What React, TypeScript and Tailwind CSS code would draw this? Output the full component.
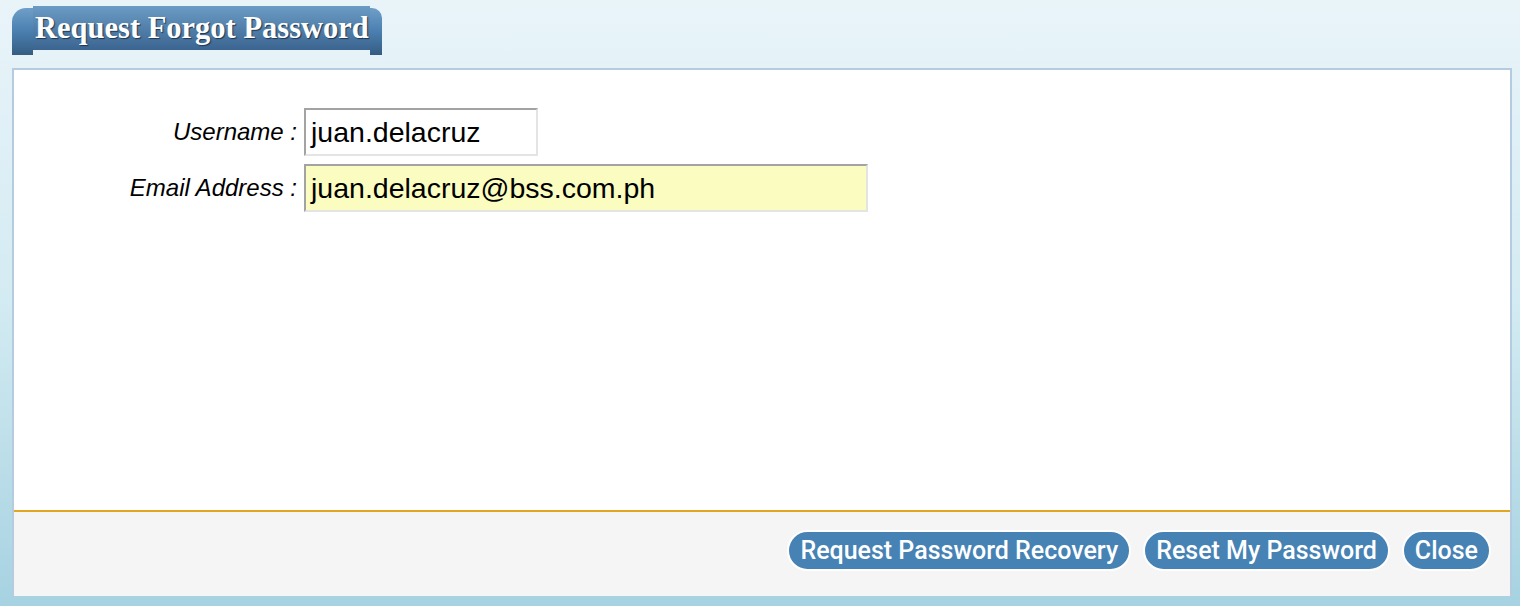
import React from 'react';

const fieldRows = [
  { label: 'Username :', value: 'juan.delacruz', width: 'w-[234px]', bg: 'bg-white' },
  { label: 'Email Address :', value: 'juan.delacruz@bss.com.ph', width: 'w-[564px]', bg: 'bg-[#fafcc0]' },
];

const buttons = ['Request Password Recovery', 'Reset My Password', 'Close'];

const App: React.FC = () => {
  return (
    <div className="w-[1520px] h-[606px] flex flex-col bg-gradient-to-b from-[#e9f4f9] via-[#d3ebf2] to-[#a6d2e1] overflow-hidden">
      {/* ribbon title */}
      <div className="flex items-start pl-[12px] pt-[6px] h-[68px] shrink-0">
        <div className="w-[21px] h-[47px] mt-[2px] rounded-tl-[14px] bg-gradient-to-b from-[#6f9fc8] via-[#4a7fb0] to-[#355d82]" />
        <div className="h-[44px] pl-[2px] pr-[1px] flex items-center bg-gradient-to-b from-[#6b9cc6] to-[#3b6590]">
          <span className="font-['Liberation_Serif',serif] font-bold text-[30.5px] leading-none text-white [text-shadow:1px_1px_1px_#1c3550] whitespace-nowrap">
            Request Forgot Password
          </span>
        </div>
        <div className="w-[12px] h-[47px] mt-[2px] rounded-tr-[10px] bg-gradient-to-b from-[#6f9fc8] via-[#4a7fb0] to-[#355d82]" />
      </div>

      {/* panel */}
      <div className="ml-[12px] mr-[8px] flex-1 flex flex-col border-2 border-b-0 border-[#b5cbe0] mb-[10px]">
        <div className="flex-1 bg-white pt-[38px]">
          <div className="grid grid-cols-[283px_auto] gap-x-[7px] gap-y-[8px] items-center font-['Liberation_Sans',Arial,sans-serif]">
            {fieldRows.map((row) => (
              <React.Fragment key={row.label}>
                <div className="text-right italic text-[24px] text-black">{row.label}</div>
                <div
                  className={`${row.width} ${row.bg} h-[48px] flex items-center pl-[5px] border-2 border-t-[#a3a3a3] border-l-[#a3a3a3] border-b-[#e4e4e4] border-r-[#e4e4e4] text-[28.5px] text-black`}
                >
                  {row.value}
                </div>
              </React.Fragment>
            ))}
          </div>
        </div>
        <div className="h-[86px] border-t-2 border-[#e1a622] bg-[#f5f5f5] flex justify-end items-start gap-[12px] pt-[18px] pr-[19px]">
          {buttons.map((b) => (
            <button
              key={b}
              className="h-[41px] px-[11px] rounded-full bg-[#4682b4] border-2 border-white text-white text-[25px] font-medium leading-none font-['Roboto',sans-serif] whitespace-nowrap"
            >
              {b}
            </button>
          ))}
        </div>
      </div>
    </div>
  );
};

export default App;
